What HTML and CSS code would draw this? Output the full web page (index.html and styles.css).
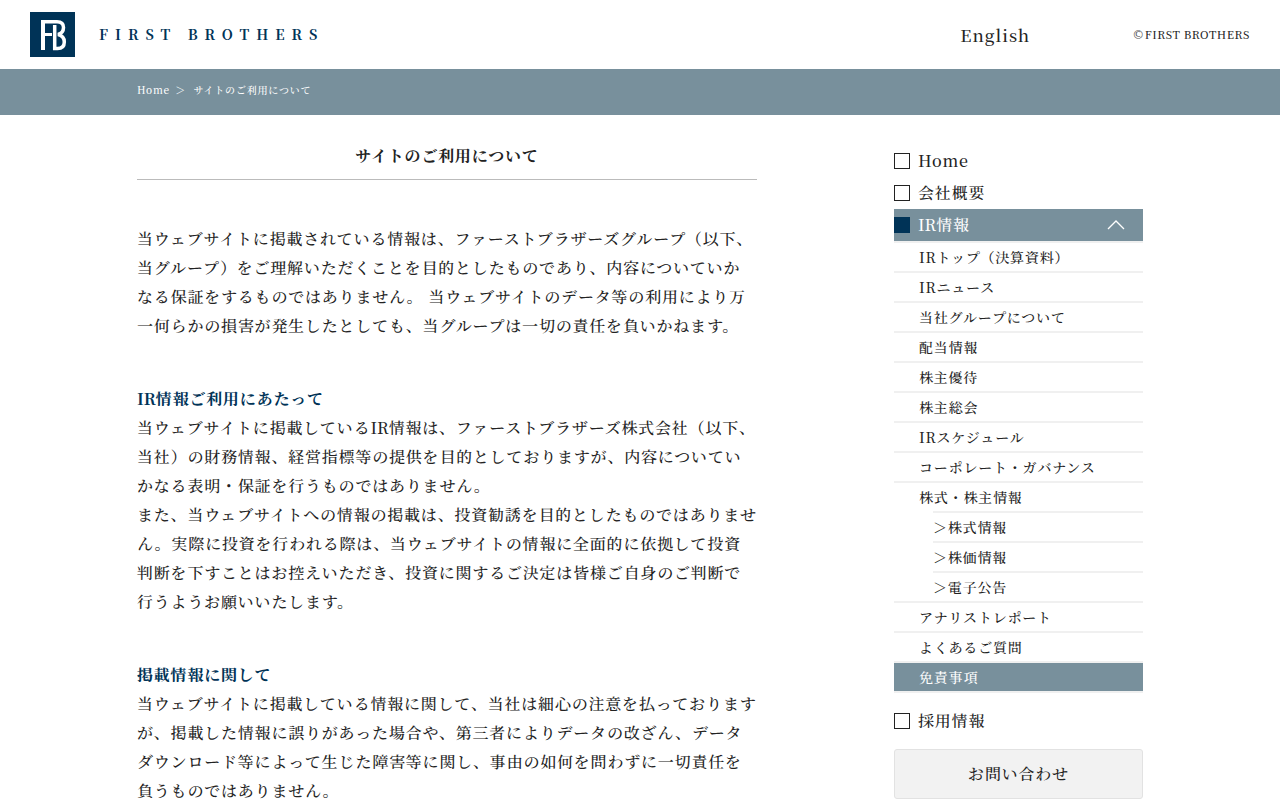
FILE: index.html
```
<!DOCTYPE html>
<html lang="ja">
<head>
    <meta charset="UTF-8">
    <meta name="viewport" content="width=device-width, initial-scale=1.0">
    <title>サイトのご利用について | FIRST BROTHERS</title>
    <link rel="stylesheet" href="styles.css">
</head>
<body>
    <header class="header">
        <a href="#" class="logo">
            <svg class="logo-mark" viewBox="0 0 45 45" aria-hidden="true">
                <rect width="45" height="45" fill="#003357"/>
                <g fill="none" stroke="#fff">
                    <path stroke-width="4" d="M13 38V10"/>
                    <path stroke-width="3.500" d="M11 9.700H27C32 9.700 33.500 12 33.500 15.500C33.500 19.500 31.500 21.500 28 22.500C32.500 23.500 34.300 26 34.300 30C34.300 34.500 32 36.500 27.500 36.500H23"/>
                    <path stroke-width="3" d="M15 22.500H22"/>
                    <path stroke-width="3.500" d="M24.700 13V38"/>
                </g>
            </svg>
            <span class="logo-text">FIRST BROTHERS</span>
        </a>
        <a href="#" class="lang">English</a>
        <small class="copyright"><span class="mark">©</span>FIRST BROTHERS</small>
    </header>

    <nav class="breadcrumb" aria-label="breadcrumb">
        <div class="container">
            <a href="#">Home</a>
            <span class="sep">＞</span>
            <span>サイトのご利用について</span>
        </div>
    </nav>

    <div class="container content">
        <main class="main">
            <h1>サイトのご利用について</h1>
            <section>
                <p>当ウェブサイトに掲載されている情報は、ファーストブラザーズグループ（以下、当グループ）をご理解いただくことを目的としたものであり、内容についていかなる保証をするものではありません。 当ウェブサイトのデータ等の利用により万一何らかの損害が発生したとしても、当グループは一切の責任を負いかねます。</p>
            </section>
            <section>
                <h2><span class="abbr">IR</span>情報ご利用にあたって</h2>
                <p>当ウェブサイトに掲載している<span class="abbr">IR</span>情報は、ファーストブラザーズ株式会社（以下、当社）の財務情報、経営指標等の提供を目的としておりますが、内容についていかなる表明・保証を行うものではありません。</p>
                <p>また、当ウェブサイトへの情報の掲載は、投資勧誘を目的としたものではありません。実際に投資を行われる際は、当ウェブサイトの情報に全面的に依拠して投資判断を下すことはお控えいただき、投資に関するご決定は皆様ご自身のご判断で行うようお願いいたします。</p>
            </section>
            <section>
                <h2>掲載情報に関して</h2>
                <p>当ウェブサイトに掲載している情報に関して、当社は細心の注意を払っておりますが、掲載した情報に誤りがあった場合や、第三者によりデータの改ざん、データダウンロード等によって生じた障害等に関し、事由の如何を問わずに一切責任を負うものではありません。</p>
            </section>
        </main>

        <aside class="side">
            <ul class="menu">
                <li><a href="#">Home</a></li>
                <li><a href="#">会社概要</a></li>
                <li class="open">
                    <a href="#"><span class="abbr">IR</span>情報
                        <svg class="arrow" viewBox="0 0 18 10" aria-hidden="true"><path d="M1 9L9 1L17 9" fill="none" stroke="#fff" stroke-width="1.300"/></svg>
                    </a>
                    <ul class="submenu">
                        <li><a href="#">IRトップ（決算資料）</a></li>
                        <li><a href="#">IRニュース</a></li>
                        <li><a href="#">当社グループについて</a></li>
                        <li><a href="#">配当情報</a></li>
                        <li><a href="#">株主優待</a></li>
                        <li><a href="#">株主総会</a></li>
                        <li><a href="#">IRスケジュール</a></li>
                        <li><a href="#">コーポレート・ガバナンス</a></li>
                        <li>
                            <a href="#">株式・株主情報</a>
                            <ul class="children">
                                <li><a href="#">＞株式情報</a></li>
                                <li><a href="#">＞株価情報</a></li>
                                <li><a href="#">＞電子公告</a></li>
                            </ul>
                        </li>
                        <li><a href="#">アナリストレポート</a></li>
                        <li><a href="#">よくあるご質問</a></li>
                        <li class="current"><a href="#">免責事項</a></li>
                    </ul>
                </li>
                <li><a href="#">採用情報</a></li>
            </ul>
            <a href="#" class="contact">お問い合わせ</a>
        </aside>
    </div>
</body>
</html>
```
FILE: styles.css
```
*,
*::before {
    box-sizing: border-box;
}

body {
    margin: 0;
    font-family: "Noto Serif JP", "Noto Serif CJK JP", "Liberation Serif", "Noto Sans CJK JP", serif;
    font-size: 16px;
    font-weight: 500;
    line-height: 29px;
    letter-spacing: 0.05em;
    color: #222;
    background-color: #fff;
}

a {
    color: inherit;
    text-decoration: none;
}

ul {
    list-style: none;
    margin: 0;
    padding: 0;
}

.container {
    max-width: 1006px;
    margin: 0 auto;
}

.abbr {
    letter-spacing: 0;
}

/* header */
.header {
    display: flex;
    align-items: center;
    padding: 12px 30px;
}

.logo {
    display: flex;
    align-items: center;
    gap: 24px;
    margin-right: auto;
    color: #003357;
}

.logo-mark {
    width: 45px;
    height: 45px;
}

.logo-text {
    font-size: 14px;
    font-weight: 700;
    letter-spacing: 7px;
}

.lang {
    font-size: 17px;
    letter-spacing: 1px;
    margin-right: 102px;
}

.copyright {
    font-size: 11px;
    letter-spacing: 0.05em;
}

.copyright .mark {
    font-family: "DejaVu Sans", sans-serif;
    font-size: 12px;
    color: #555;
}

/* breadcrumb */
.breadcrumb {
    background-color: #78909c;
    color: #fff;
    font-size: 10px;
    line-height: 20px;
    padding: 11px 0 15px;
}

.breadcrumb .sep {
    margin: 0 4px 0 2px;
}

/* main */
.content {
    display: flex;
    justify-content: space-between;
    align-items: flex-start;
    padding-top: 26px;
}

.main {
    flex: 0 1 620px;
}

.main h1 {
    margin: 0 0 44px;
    padding-bottom: 9px;
    border-bottom: 1px solid #bbb;
    font-size: 16px;
    text-align: center;
}

.main section {
    margin-bottom: 44px;
}

.main h2 {
    margin: 0;
    font-size: 16px;
    color: #003357;
}

.main p {
    margin: 0;
}

/* side menu */
.side {
    flex: 0 0 249px;
    padding-top: 4px;
}

.menu > li > a {
    display: flex;
    align-items: center;
    line-height: 32px;
}

.menu > li > a::before {
    content: "";
    width: 16px;
    height: 16px;
    margin-right: 8px;
    border: 1px solid #222;
}

.menu > .open {
    margin-bottom: 12px;
}

.menu > .open > a {
    background-color: #78909c;
    color: #fff;
}

.menu > .open > a::before {
    background-color: #003357;
    border-color: #003357;
}

.arrow {
    width: 18px;
    height: 10px;
    margin-left: auto;
    margin-right: 18px;
}

.submenu {
    border-top: 2px solid #f0f0f0;
    font-size: 14px;
    line-height: 28px;
}

.submenu > li {
    border-bottom: 2px solid #f0f0f0;
}

.submenu > li > a {
    display: block;
    padding-left: 25px;
}

.submenu .current {
    background-color: #78909c;
    color: #fff;
}

.children {
    margin-left: 39px;
}

.children li {
    border-top: 2px solid #f0f0f0;
}

.children a {
    display: block;
}

.contact {
    display: block;
    margin-top: 12px;
    border: 1px solid #e2e2e2;
    border-radius: 3px;
    background-color: #f2f2f2;
    line-height: 48px;
    text-align: center;
}
```
